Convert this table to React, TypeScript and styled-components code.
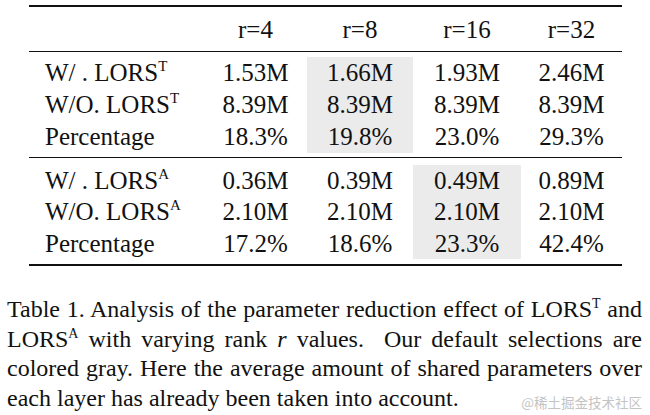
import React from "react";
import styled, { createGlobalStyle } from "styled-components";

const Global = createGlobalStyle`
  html, body { margin: 0; padding: 0; background: #fff; }
  body {
    width: 650px; height: 415px; overflow: hidden;
    font-family: "Liberation Serif", "DejaVu Serif", serif;
  }
`;

const serif = `"Liberation Serif", "DejaVu Serif", serif`;

const Page = styled.div`
  position: relative;
  width: 650px;
  height: 415px;
  background: #fff;
  font-family: ${serif};
  color: #111;
  padding-top: 5px;
  box-sizing: border-box;
`;

const Table = styled.div`
  margin-left: 29px;
  width: 593px;
  border-top: 2px solid #111;
  border-bottom: 2px solid #111;
`;

const cols = "175px 103px 106px 108px 101px";

const HeaderRow = styled.div`
  display: grid;
  grid-template-columns: ${cols};
  height: 44px;
  line-height: 45px;
  font-size: 25px;
  border-bottom: 1px solid #111;
`;

const Section = styled.div<{ $pt: number; $pb: number; $rh: number; $last?: boolean }>`
  display: grid;
  grid-template-columns: ${cols};
  grid-auto-rows: ${(p) => p.$rh}px;
  line-height: ${(p) => p.$rh}px;
  padding-top: ${(p) => p.$pt}px;
  padding-bottom: ${(p) => p.$pb}px;
  font-size: 25px;
  border-bottom: ${(p) => (p.$last ? "none" : "1px solid #111")};
`;

const Label = styled.div`
  padding-left: 16px;
  white-space: nowrap;
  font-family: ${serif};
`;

const Cell = styled.div<{ $gray?: boolean }>`
  text-align: center;
  font-family: ${serif};
  background: ${(p) => (p.$gray ? "#ebebeb" : "transparent")};
`;

const Sup = styled.sup`
  font-size: 15px;
  vertical-align: 10px;
  line-height: 0;
`;

const Caption = styled.p`
  margin: 29px 8px 0 7px;
  font-family: ${serif};
  font-size: 24px;
  line-height: 29.7px;
  text-align: justify;
`;

const CapSup = styled.sup`
  font-size: 14px;
  vertical-align: 9px;
  line-height: 0;
`;

const Watermark = styled.div`
  position: absolute;
  right: 8px;
  bottom: 3px;
  font-family: "Noto Sans CJK SC", "Noto Sans", sans-serif;
  font-size: 13.5px;
  color: #c4c4c4;
`;

type Row = { label: React.ReactNode; vals: string[] };

const sectionT: Row[] = [
  { label: <>W/ . LORS<Sup>T</Sup></>, vals: ["1.53M", "1.66M", "1.93M", "2.46M"] },
  { label: <>W/O. LORS<Sup>T</Sup></>, vals: ["8.39M", "8.39M", "8.39M", "8.39M"] },
  { label: "Percentage", vals: ["18.3%", "19.8%", "23.0%", "29.3%"] },
];

const sectionA: Row[] = [
  { label: <>W/ . LORS<Sup>A</Sup></>, vals: ["0.36M", "0.39M", "0.49M", "0.89M"] },
  { label: <>W/O. LORS<Sup>A</Sup></>, vals: ["2.10M", "2.10M", "2.10M", "2.10M"] },
  { label: "Percentage", vals: ["17.2%", "18.6%", "23.3%", "42.4%"] },
];

function renderRows(rows: Row[], grayCol: number) {
  return rows.map((r, i) => (
    <React.Fragment key={i}>
      <Label>{r.label}</Label>
      {r.vals.map((v, j) => (
        <Cell key={j} $gray={j === grayCol}>
          {v}
        </Cell>
      ))}
    </React.Fragment>
  ));
}

export default function App() {
  return (
    <Page>
      <Global />
      <Table>
        <HeaderRow>
          <Label />
          <Cell>r=4</Cell>
          <Cell>r=8</Cell>
          <Cell>r=16</Cell>
          <Cell>r=32</Cell>
        </HeaderRow>
        <Section $pt={5} $pb={4} $rh={32}>
          {renderRows(sectionT, 1)}
        </Section>
        <Section $pt={7} $pb={5} $rh={31.3} $last>
          {renderRows(sectionA, 2)}
        </Section>
      </Table>
      <Caption>
        Table 1. Analysis of the parameter reduction effect of LORS<CapSup>T</CapSup> and
        LORS<CapSup>A</CapSup> with varying rank <i>r</i> values.&nbsp; Our default selections are
        colored gray. Here the average amount of shared parameters over each layer has already
        been taken into account.
      </Caption>
      <Watermark>@稀土掘金技术社区</Watermark>
    </Page>
  );
}
